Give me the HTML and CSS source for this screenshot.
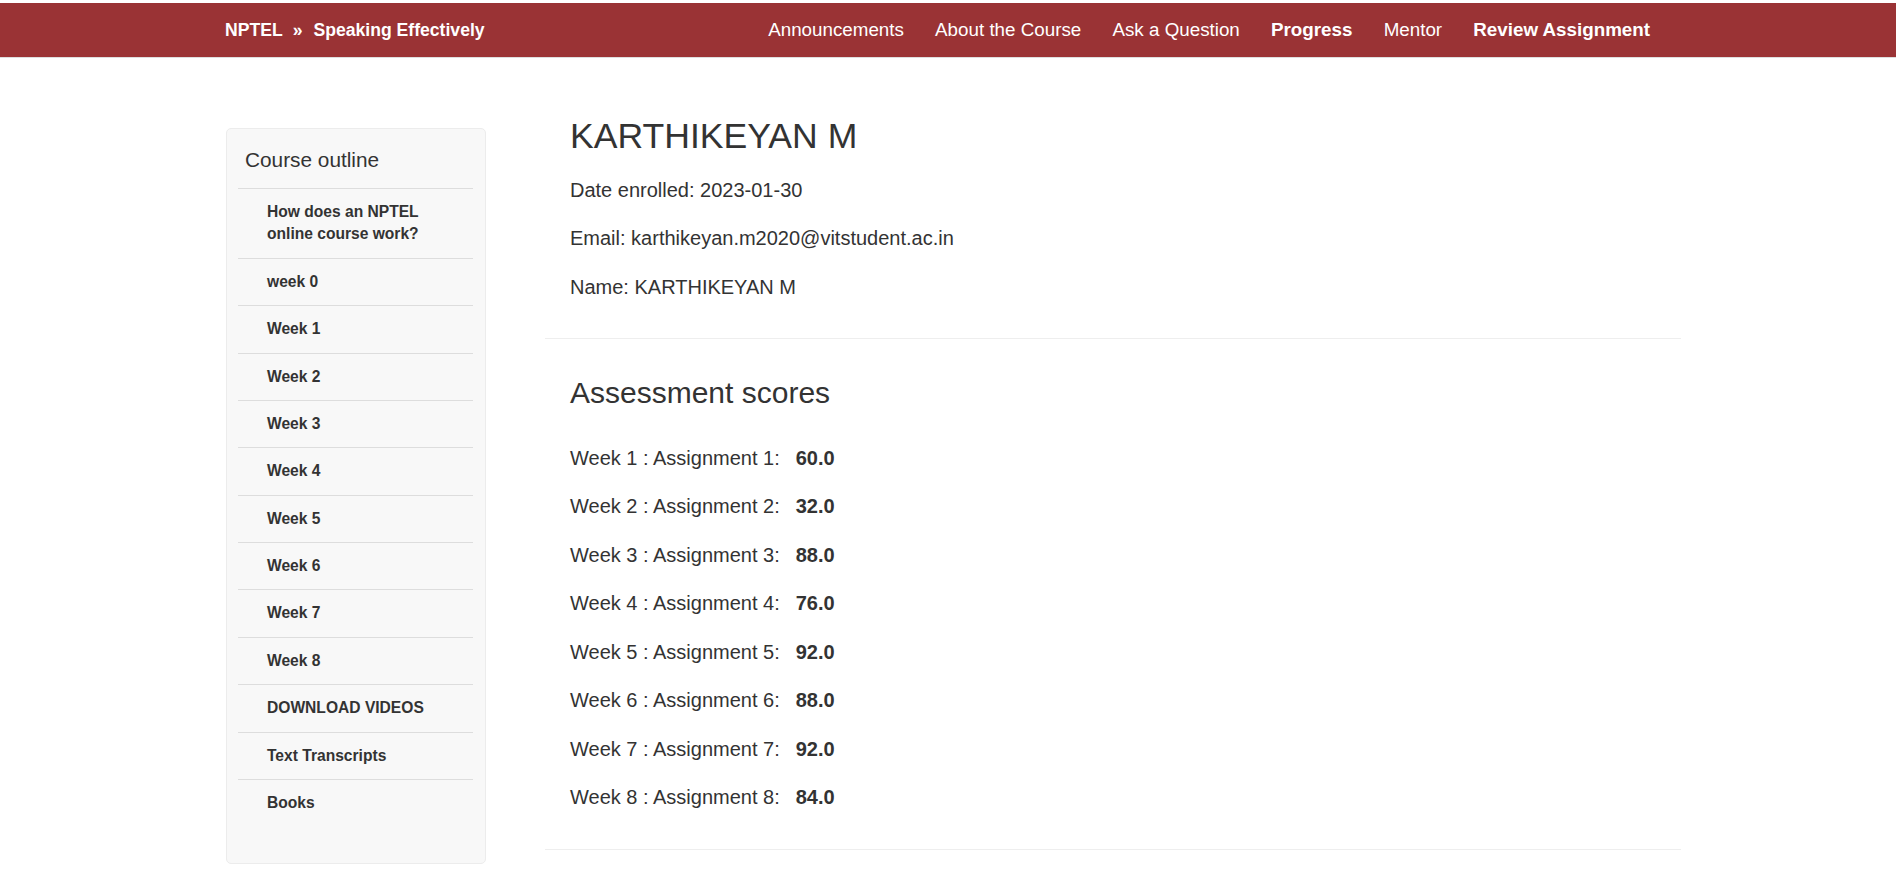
FILE: index.html
```html
<!DOCTYPE html>
<html lang="en">
<head>
<meta charset="utf-8">
<title>Progress - Speaking Effectively</title>
<link rel="stylesheet" href="styles.css">
</head>
<body>
<header class="navbar">
  <div class="navbar-inner">
    <div class="brand"><span>NPTEL</span><span class="sep">»</span><span>Speaking Effectively</span></div>
    <nav class="nav">
      <a href="#">Announcements</a>
      <a href="#">About the Course</a>
      <a href="#">Ask a Question</a>
      <a href="#" class="strong">Progress</a>
      <a href="#">Mentor</a>
      <a href="#" class="strong">Review Assignment</a>
    </nav>
  </div>
</header>

<div class="layout">
  <aside class="outline">
    <h3 class="outline-title">Course outline</h3>
    <ul class="outline-list">
      <li><a href="#">How does an NPTEL online course work?</a></li>
      <li><a href="#">week 0</a></li>
      <li><a href="#">Week 1</a></li>
      <li><a href="#">Week 2</a></li>
      <li><a href="#">Week 3</a></li>
      <li><a href="#">Week 4</a></li>
      <li><a href="#">Week 5</a></li>
      <li><a href="#">Week 6</a></li>
      <li><a href="#">Week 7</a></li>
      <li><a href="#">Week 8</a></li>
      <li><a href="#">DOWNLOAD VIDEOS</a></li>
      <li><a href="#">Text Transcripts</a></li>
      <li><a href="#">Books</a></li>
    </ul>
  </aside>

  <main class="profile">
    <section class="profile-info">
      <h1>KARTHIKEYAN M</h1>
      <p>Date enrolled: 2023-01-30</p>
      <p>Email: karthikeyan.m2020@vitstudent.ac.in</p>
      <p>Name: KARTHIKEYAN M</p>
    </section>
    <hr class="divider">
    <section class="scores">
      <h2>Assessment scores</h2>
      <p>Week 1 : Assignment 1:<strong>60.0</strong></p>
      <p>Week 2 : Assignment 2:<strong>32.0</strong></p>
      <p>Week 3 : Assignment 3:<strong>88.0</strong></p>
      <p>Week 4 : Assignment 4:<strong>76.0</strong></p>
      <p>Week 5 : Assignment 5:<strong>92.0</strong></p>
      <p>Week 6 : Assignment 6:<strong>88.0</strong></p>
      <p>Week 7 : Assignment 7:<strong>92.0</strong></p>
      <p>Week 8 : Assignment 8:<strong>84.0</strong></p>
    </section>
    <hr class="divider">
  </main>
</div>
</body>
</html>
```

FILE: styles.css
```css
html, body {
  background: #fff;
}

body {
  margin: 0;
  font-family: "Liberation Sans", Arial, sans-serif;
  color: #333;
}

/* Top bar */
.navbar {
  margin-top: 3px;
  height: 54px;
  background: #9a3335;
  border-bottom: 1px solid #dedede;
}

.navbar-inner {
  margin-left: 225px;
  width: 1425px;
  height: 100%;
  display: flex;
  align-items: center;
}

.brand {
  font-size: 17.6px;
  font-weight: bold;
  color: #fff;
}

.sep {
  margin: 0 11px 0 10px;
}

.nav {
  margin-left: auto;
  display: flex;
  gap: 31.2px;
  font-size: 18.8px;
}

.nav a {
  color: #fff;
  text-decoration: none;
}

.nav a.strong {
  font-weight: bold;
}

/* Layout */
.layout {
  display: grid;
  grid-template-columns: 260px 1136px;
  column-gap: 59px;
  align-items: start;
  margin: 59px 0 0 226px;
}

/* Sidebar */
.outline {
  margin-top: 11px;
  background: #f8f8f8;
  border: 1px solid #ececec;
  border-radius: 5px;
  padding: 0 12px 37px 11px;
}

.outline-title {
  margin: 0;
  padding: 19px 0 16px 7px;
  font-size: 20.8px;
  font-weight: normal;
  line-height: 24px;
  color: #333;
}

.outline-list {
  list-style: none;
  margin: 0;
  padding: 0;
}

.outline-list li {
  border-top: 1px solid #ddd;
  padding: 12px 15px 12px 29px;
  font-size: 15.6px;
  font-weight: bold;
  line-height: 22.38px;
}

.outline-list a {
  color: #333;
  text-decoration: none;
}

/* Main */
.profile-info,
.scores {
  padding: 0 25px 36.6px;
}

.profile-info {
  padding-bottom: 35.8px;
}

.scores {
  padding-top: 37.2px;
}

.profile h1 {
  margin: 0 0 20px;
  font-size: 35.6px;
  font-weight: normal;
  line-height: 38.5px;
}

.profile h2 {
  margin: 0 0 34.9px;
  font-size: 30px;
  font-weight: normal;
  line-height: 33px;
}

.profile p {
  margin: 0 0 20.4px;
  font-size: 20px;
  line-height: 28.6px;
}

.scores p {
  margin-bottom: 19.9px;
}

.profile p:last-child {
  margin-bottom: 0;
}

.scores strong {
  margin-left: 16px;
}

.divider {
  margin: 0;
  height: 0;
  border: 0;
  border-top: 1px solid #eee;
}
```
